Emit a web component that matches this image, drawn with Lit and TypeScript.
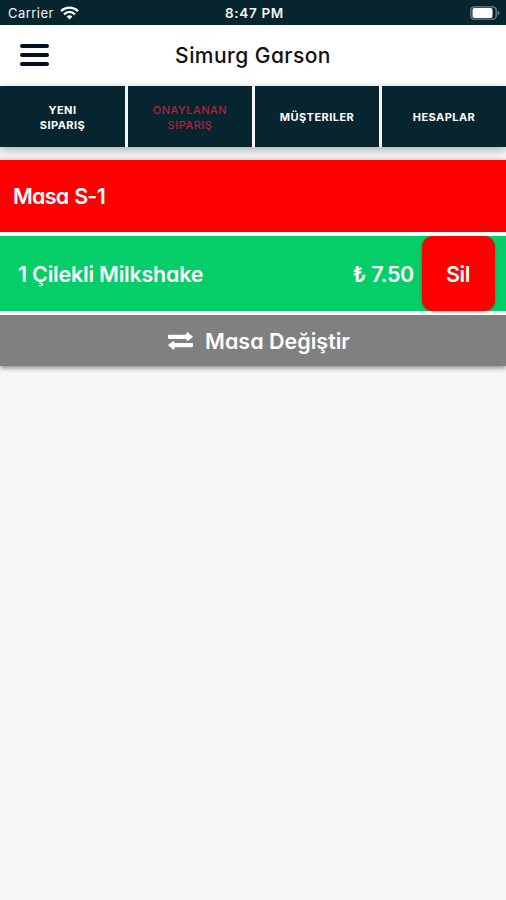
import { LitElement, html, css } from "lit";
import { customElement, state } from "lit/decorators.js";
import { classMap } from "lit/directives/class-map.js";

@customElement("status-bar")
class StatusBar extends LitElement {
  static styles = css`
    :host { display: grid; grid-template-columns: 1fr auto 1fr; align-items: center; height: 25px; box-sizing: border-box; padding: 1px 6px 0 8px; background: #06252f; color: #f3f6f7; font-size: 13px; font-feature-settings: normal; }
    .left { display: flex; align-items: center; gap: 6px; }
    .carrier { letter-spacing: 0.45px; }
    .time { font-weight: 600; font-size: 13.5px; letter-spacing: 0.65px; margin-right: -1px; }
    .right { display: flex; justify-content: flex-end; }
    svg { display: block; }
  `;
  render() {
    return html`
      <div class="left"><span class="carrier">Carrier</span>
        <svg width="19" height="14" viewBox="0 0 19 14" fill="none" stroke="#fff" stroke-width="2.4">
          <path d="M1 5.1C6 .5 13 .5 18 5.1" /><path d="M4 8.3c3.3-3 7.7-3 11 0" />
          <path d="M6.6 10.4c1.8-1.5 4-1.5 5.8 0l-2.9 3z" fill="#fff" stroke="none" />
        </svg>
      </div>
      <span class="time">8:47 PM</span>
      <div class="right">
        <svg width="30" height="14" viewBox="0 0 30 14">
          <rect x=".8" y=".8" width="25.400" height="12.400" rx="3.500" fill="none" stroke="#72838a" stroke-width="1.3" />
          <rect x="2.500" y="2" width="20" height="10" rx="1.800" fill="#fff" />
          <path d="M27.6 4.500c2.4.8 2.4 4.200 0 5z" fill="#72838a" />
        </svg>
      </div>`;
  }
}

@customElement("app-root")
class AppRoot extends LitElement {
  @state() private active = 1;

  private tabs = [["YENI", "SIPARIŞ"], ["ONAYLANAN", "SIPARIŞ"], ["MÜŞTERILER"], ["HESAPLAR"]];

  static styles = css`
    :host { display: flex; flex-direction: column; height: 900px; overflow: hidden; background: #f7f7f7; color: #fff; font-family: Inter, "Open Sans", sans-serif; font-feature-settings: "cv11"; }
    button { font: inherit; color: inherit; border: 0; margin: 0; padding: 0; background: none; font-feature-settings: inherit; letter-spacing: inherit; }
    header { display: grid; grid-template-columns: 30px 1fr 30px; align-items: center; height: 61px; padding: 0 20px; background: #fff; color: #111; flex: none; }
    .menu { display: flex; flex-direction: column; gap: 5px; width: 29px; margin-top: -1px; }
    .menu span { height: 4px; border-radius: 2px; background: #06101f; }
    h1 { margin: 0; text-align: center; font-size: 21px; font-weight: 500; line-height: 28px; letter-spacing: 0.45px; }
    nav { display: grid; grid-template-columns: 125px 124px 124px 1fr; gap: 3px; height: 61px; background: #f7f7f7; box-shadow: 0 3px 9px rgba(0, 30, 30, 0.32); flex: none; }
    .tab { display: flex; flex-direction: column; align-items: center; justify-content: center; padding-top: 3px; background: #06252f; font-size: 11px; letter-spacing: 0.45px; line-height: 15px; font-weight: 700; }
    .tab:nth-child(n + 3) { padding-top: 1px; }
    .tab.active { color: #b5203a; font-weight: 500; letter-spacing: 0.5px; }
    .card { display: flex; flex-direction: column; gap: 4px; margin-top: 12px; background: #fff; border-top: 1px solid #fbd5d5; box-shadow: 0 2px 5px rgba(0, 0, 0, 0.45); font-size: 21.5px; font-weight: 600; position: relative; }
    .table { display: flex; align-items: center; height: 72px; padding-left: 13px; background: #f00; letter-spacing: -0.75px; word-spacing: 1px; }
    .item { display: flex; align-items: center; height: 75px; padding: 0 11.5px 0 18px; background: #04ce68; }
    .name { flex: 1; letter-spacing: -0.22px; }
    .price { margin-right: 7.5px; letter-spacing: -0.3px; }
    .delete { width: 73px; height: 75px; border-radius: 11px; background: #f00; box-shadow: 0 1px 3px rgba(0, 0, 0, 0.28); letter-spacing: -0.4px; }
    .move { display: flex; align-items: center; justify-content: center; gap: 12px; height: 51px; background: #808080; padding-left: 12px; }
  `;

  render() {
    return html`
      <status-bar></status-bar>
      <header>
        <button class="menu" aria-label="Menü"><span></span><span></span><span></span></button>
        <h1>Simurg Garson</h1>
      </header>
      <nav>
        ${this.tabs.map((lines, i) => html`
          <button class=${classMap({ tab: true, active: i === this.active })} @click=${() => (this.active = i)}>
            ${lines.map((line) => html`<span>${line}</span>`)}
          </button>`)}
      </nav>
      <section class="card">
        <div class="table">Masa S-1</div>
        <div class="item">
          <span class="name">1 Çilekli Milkshake</span>
          <span class="price">₺ 7.50</span>
          <button class="delete">Sil</button>
        </div>
        <button class="move">
          <svg width="25" height="18" viewBox="0 0 25 18" fill="#fff">
            <path d="M1 2.800h17.500V.9c0-.8.8-1 1.300-.5l4.600 3.900c.4.300.4.800 0 1.100l-4.600 3.400c-.5.400-1.300.1-1.300-.6V6.900H1a1 1 0 0 1-1-1V3.800a1 1 0 0 1 1-1z" />
            <path d="M24 11.100H6.500V9.800c0-.7-.8-1-1.300-.6L.6 12.600c-.4.300-.4.800 0 1.100l4.600 3.900c.5.500 1.300.3 1.300-.5v-1.900H24a1 1 0 0 0 1-1v-2.100a1 1 0 0 0-1-1z" />
          </svg>
          <span>Masa Değiştir</span>
        </button>
      </section>`;
  }
}
